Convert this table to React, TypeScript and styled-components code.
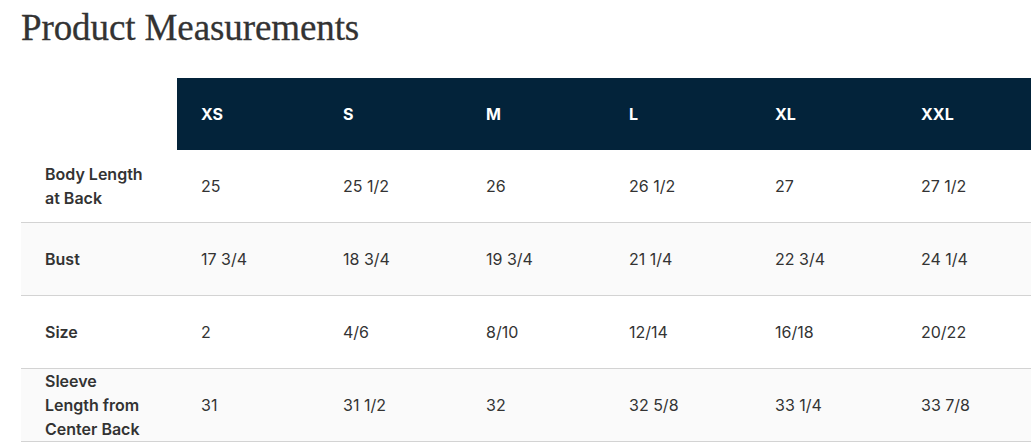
import React from "react";
import styled, { createGlobalStyle } from "styled-components";

const Global = createGlobalStyle`
  html, body { margin: 0; padding: 0; background: #fff; overflow: hidden; }
  body { font-family: Inter, "Noto Sans", sans-serif; }
`;

const Page = styled.div`
  padding: 0 0 0 21px;
  width: 1100px;
`;

const Title = styled.h1`
  margin: 0;
  padding-top: 6px;
  height: 78px;
  box-sizing: border-box;
  font-family: "Liberation Serif", "DejaVu Serif", serif;
  font-weight: 400;
  font-size: 37px;
  line-height: 44px;
  color: #333;
  letter-spacing: -0.1px;
  -webkit-text-stroke: 0.3px #333;
`;

const Table = styled.table`
  border-collapse: collapse;
  table-layout: fixed;
  width: 1026px;
  font-size: 16px;
  color: #333;
`;

const HeadCell = styled.th<{ $blank?: boolean }>`
  height: 72px;
  padding: 0 0 0 24px;
  text-align: left;
  font-weight: 700;
  color: #fff;
  background: ${(p) => (p.$blank ? "#fff" : "#03233a")};
`;

const Row = styled.tr`
  border-bottom: 1px solid #d3d3d3;
  &:nth-child(even) { background: #fafafa; }
`;

const Label = styled.th`
  height: 72px;
  padding: 0 24px;
  text-align: left;
  font-weight: 600;
  line-height: 24px;
  vertical-align: middle;
`;

const Cell = styled.td`
  padding: 0 0 0 24px;
  line-height: 24px;
  vertical-align: middle;
`;

const sizes = ["XS", "S", "M", "L", "XL", "XXL"];
const widths = [156, 142, 143, 143, 146, 146, 150];

const rows: { label: string; values: string[] }[] = [
  { label: "Body Length at Back", values: ["25", "25 1/2", "26", "26 1/2", "27", "27 1/2"] },
  { label: "Bust", values: ["17 3/4", "18 3/4", "19 3/4", "21 1/4", "22 3/4", "24 1/4"] },
  { label: "Size", values: ["2", "4/6", "8/10", "12/14", "16/18", "20/22"] },
  { label: "Sleeve Length from Center Back", values: ["31", "31 1/2", "32", "32 5/8", "33 1/4", "33 7/8"] },
];

export default function App() {
  return (
    <>
      <Global />
      <Page>
        <Title>Product Measurements</Title>
        <Table>
          <colgroup>
            {widths.map((w, i) => (
              <col key={i} style={{ width: w }} />
            ))}
          </colgroup>
          <thead>
            <tr>
              <HeadCell $blank />
              {sizes.map((s) => (
                <HeadCell key={s}>{s}</HeadCell>
              ))}
            </tr>
          </thead>
          <tbody>
            {rows.map((r) => (
              <Row key={r.label}>
                <Label>{r.label}</Label>
                {r.values.map((v, i) => (
                  <Cell key={i}>{v}</Cell>
                ))}
              </Row>
            ))}
          </tbody>
        </Table>
      </Page>
    </>
  );
}
